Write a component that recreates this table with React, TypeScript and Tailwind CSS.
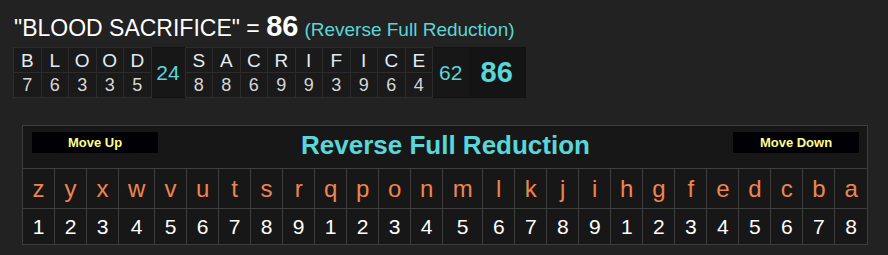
const word1 = [
  ['B', 7],
  ['L', 6],
  ['O', 3],
  ['O', 3],
  ['D', 5],
] as const

const word2 = [
  ['S', 8],
  ['A', 8],
  ['C', 6],
  ['R', 9],
  ['I', 9],
  ['F', 3],
  ['I', 9],
  ['C', 6],
  ['E', 4],
] as const

const alphabet = 'zyxwvutsrqponmlkjihgfedcba'.split('')
// reverse full reduction: z=1 ... r=9, q=1 ... i=9, h=1 ... a=8
const values = alphabet.map((_, i) => (i % 9) + 1)

function colWidth(ch: string) {
  if (ch === 'w') return 'w-9'
  if (ch === 'm') return 'w-10'
  return 'w-8'
}

export default function App() {
  return (
    <div className="h-[255px] w-[888px] overflow-hidden bg-[#222222] font-['Liberation_Sans',Arial,sans-serif]">
      <div className="flex h-[47px] items-baseline pl-[14px] pt-[12px] leading-none">
        <span className="text-[23px] text-white">"BLOOD SACRIFICE" =&nbsp;</span>
        <span className="text-[29px] font-bold text-white">86</span>
        <span className="ml-[6px] text-[19px] text-[#5ad6d9]">(Reverse Full Reduction)</span>
      </div>

      <table className="ml-[13px] w-[512px] table-fixed border-collapse border border-[#121212] bg-[#1a1a1a]">
        <colgroup>
          {word1.map((_, i) => (
            <col key={'a' + i} className="w-[27.5px]" />
          ))}
          <col className="w-[34px]" />
          {word2.map((_, i) => (
            <col key={'b' + i} className="w-[27.5px]" />
          ))}
          <col className="w-[36px]" />
          <col className="w-[57px]" />
        </colgroup>
        <tbody>
          <tr className="h-[25px]">
            {word1.map(([ch], i) => (
              <td key={i} className="border border-[#2c2c2c] text-center text-[19px] leading-none text-[#e2ecf4]">
                {ch}
              </td>
            ))}
            <td rowSpan={2} className="bg-[#171717] text-center text-[21px] text-[#5ad6d9]">
              24
            </td>
            {word2.map(([ch], i) => (
              <td key={i} className="border border-[#2c2c2c] text-center text-[19px] leading-none text-[#e2ecf4]">
                {ch}
              </td>
            ))}
            <td rowSpan={2} className="bg-[#171717] text-center text-[21px] text-[#5ad6d9]">
              62
            </td>
            <td rowSpan={2} className="bg-[#141414] text-center text-[29px] font-bold text-[#5ad6d9]">
              86
            </td>
          </tr>
          <tr className="h-[25px]">
            {word1.map(([, n], i) => (
              <td key={i} className="border border-[#2c2c2c] text-center text-[18px] leading-none text-[#d6d6d6]">
                {n}
              </td>
            ))}
            {word2.map(([, n], i) => (
              <td key={i} className="border border-[#2c2c2c] text-center text-[18px] leading-none text-[#d6d6d6]">
                {n}
              </td>
            ))}
          </tr>
        </tbody>
      </table>

      <table className="ml-[22px] mt-[27px] w-[846px] table-fixed border-collapse border border-[#3e3e3e] bg-[#171717]">
        <colgroup>
          {alphabet.map((ch) => (
            <col key={ch} className={colWidth(ch)} />
          ))}
        </colgroup>
        <tbody>
          <tr className="h-[43px]">
            <td colSpan={26} className="border border-[#3e3e3e] p-0 align-top">
              <div className="grid grid-cols-[126px_1fr_126px] items-start pl-[9px] pr-[8px] pt-[6px]">
                <button className="h-[21px] bg-[#000005] text-[13px] font-bold text-[#ffff8a]">Move Up</button>
                <div className="text-center text-[26px] font-bold leading-[27px] text-[#5ad6d9]">
                  Reverse Full Reduction
                </div>
                <button className="h-[21px] bg-[#000005] text-[13px] font-bold text-[#ffff8a]">Move Down</button>
              </div>
            </td>
          </tr>
          <tr className="h-[40px]">
            {alphabet.map((ch) => (
              <td key={ch} className="border border-[#3e3e3e] text-center text-[24px] leading-none text-[#ee8550]">
                {ch}
              </td>
            ))}
          </tr>
          <tr className="h-[36px]">
            {values.map((v, i) => (
              <td key={i} className="border border-[#3e3e3e] text-center text-[21px] leading-none text-white">
                {v}
              </td>
            ))}
          </tr>
        </tbody>
      </table>
    </div>
  )
}
